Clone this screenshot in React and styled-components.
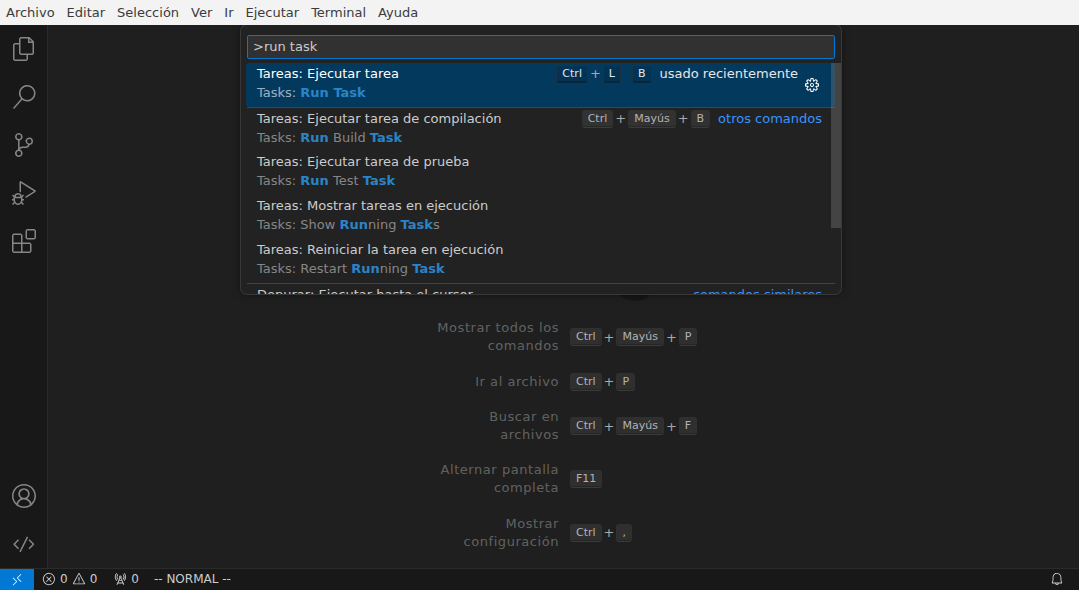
import React from 'react'
import styled, { createGlobalStyle } from 'styled-components'
import {
  VscFiles,
  VscSearch,
  VscSourceControl,
  VscDebugAlt,
  VscExtensions,
  VscAccount,
  VscCode,
  VscRemote,
  VscError,
  VscWarning,
  VscRadioTower,
  VscBell,
  VscSettingsGear,
} from 'react-icons/vsc'

const GlobalStyle = createGlobalStyle`
  html, body, #root {
    margin: 0;
    height: 100%;
  }
  body {
    font-family: "DejaVu Sans", sans-serif;
    font-size: 13px;
    overflow: hidden;
    background: #1f1f1f;
  }
`

const Page = styled.div`
  display: flex;
  flex-direction: column;
  height: 100vh;
`

const MenuBar = styled.div`
  display: flex;
  flex: none;
  height: 25px;
  align-items: center;
  background: #f3f3f3;
  color: #3b3b3b;
  padding-bottom: 1px;
  box-sizing: border-box;
`

const MenuItem = styled.div`
  padding: 0 6px;
`

const Workbench = styled.div`
  position: relative;
  display: flex;
  flex: 1;
  min-height: 0;
  overflow: hidden;
`

const ActivityBar = styled.div`
  display: flex;
  flex: none;
  flex-direction: column;
  justify-content: space-between;
  box-sizing: border-box;
  width: 48px;
  background: #181818;
  border-right: 1px solid #2b2b2b;
  color: #868686;
`

const ActivityGroup = styled.div`
  display: flex;
  flex-direction: column;
`

const ActivityItem = styled.div`
  display: flex;
  height: 48px;
  align-items: center;
  justify-content: center;
  font-size: 24px;
`

const Editor = styled.div`
  display: flex;
  flex: 1;
  flex-direction: column;
  align-items: center;
  justify-content: flex-end;
  padding-bottom: 17.4px;
  background: #1f1f1f;
`

const LogoMark = styled.svg`
  display: block;
  margin-left: 147px;
  margin-bottom: 18.6px;
`

const Watermark = styled.div`
  display: flex;
  flex-direction: column;
  gap: 17.3px;
  width: 265px;
`

const WatermarkRow = styled.div`
  display: flex;
  align-items: center;
  gap: 11px;
`

const WatermarkLabel = styled.div`
  flex: none;
  width: 128px;
  text-align: right;
  color: rgba(204, 204, 204, 0.4);
  letter-spacing: 0.55px;
  line-height: 18px;
`

const Keys = styled.div`
  display: flex;
  align-items: center;
  color: #a8a8a8;
  font-size: 13px;
`

const Plus = styled.span`
  margin: 0 2px;
`

const Key = styled.span`
  display: inline-block;
  box-sizing: border-box;
  height: 18px;
  padding: 0 5px;
  border-radius: 3px;
  background: ${(p) => (p.$dark ? 'rgba(0, 0, 0, 0.1)' : 'rgba(128, 128, 128, 0.17)')};
  border: 1px solid rgba(51, 51, 51, 0.6);
  border-bottom-color: ${(p) => (p.$dark ? 'rgba(20, 20, 20, 0.45)' : 'rgba(68, 68, 68, 0.6)')};
  box-shadow: inset 0 -1px 0 rgba(0, 0, 0, 0.2);
  font-size: 11px;
  line-height: 15px;
  color: ${(p) => (p.$dark ? '#e0e8ee' : '#b3b3b3')};
  margin-left: ${(p) => p.$chord || 0}px;
`

const QuickInput = styled.div`
  position: absolute;
  top: 0;
  left: 241px;
  display: flex;
  flex-direction: column;
  box-sizing: border-box;
  width: 600px;
  height: 269px;
  overflow: hidden;
  background: #222222;
  border-radius: 6px;
  box-shadow: 0 0 0 1px #383838, 0 0 8px rgba(0, 0, 0, 0.5);
`

const InputWrap = styled.div`
  flex: none;
  padding: 10px 6px 4px;
`

const CommandInput = styled.input`
  display: block;
  box-sizing: border-box;
  width: 100%;
  height: 24px;
  padding: 0 5px 2px;
  border: 1px solid #0078d4;
  border-radius: 2px;
  outline: none;
  background: #313131;
  color: #cccccc;
  font-family: "DejaVu Sans", sans-serif;
  font-size: 13px;
`

const List = styled.div`
  position: relative;
  flex: 1;
  min-height: 0;
  overflow: hidden;
  padding: 0 6px 0 5px;
`

const Scrollbar = styled.div`
  position: absolute;
  top: 0;
  right: 0;
  width: 10px;
  height: 165px;
  background: rgba(121, 121, 121, 0.4);
`

const Row = styled.div`
  position: relative;
  display: flex;
  box-sizing: border-box;
  height: 44px;
  padding: ${(p) => p.$top || 1}px ${(p) => (p.$active ? 37 : 13)}px 0 11px;
  justify-content: space-between;
  border-radius: ${(p) => (p.$active ? '3px' : '0')};
  background: ${(p) => (p.$active ? '#04395e' : 'transparent')};
  color: ${(p) => (p.$active ? '#ffffff' : '#cccccc')};
`

const Separator = styled.div`
  position: absolute;
  top: 0;
  left: 1px;
  right: 0;
  height: 1px;
  background: rgba(204, 204, 204, 0.2);
`

const RowLabels = styled.div`
  display: flex;
  flex-direction: column;
`

const Title = styled.div`
  line-height: 19px;
`

const Detail = styled.div`
  line-height: 19px;
  color: ${(p) => (p.$active ? 'rgba(255, 255, 255, 0.62)' : 'rgba(204, 204, 204, 0.6)')};
`

const Match = styled.span`
  color: #2a84c8;
  font-weight: 700;
`

const RowRight = styled.div`
  display: flex;
  align-items: center;
  height: 19px;
`

const Category = styled.span`
  margin-left: 8px;
  color: ${(p) => (p.$active ? '#e6e6e6' : '#3794ff')};
`

const GearIcon = styled.span`
  position: absolute;
  right: 16px;
  top: 15px;
  display: flex;
  font-size: 14px;
  color: #ffffff;
`

const StatusBar = styled.div`
  display: flex;
  flex: none;
  box-sizing: border-box;
  height: 22px;
  align-items: center;
  background: #181818;
  border-top: 1px solid #2b2b2b;
  color: #cccccc;
  font-size: 12px;
`

const RemoteButton = styled.div`
  display: flex;
  width: 34px;
  height: 100%;
  align-items: center;
  justify-content: center;
  background: #0078d4;
  color: #ffffff;
  font-size: 14px;
`

const StatusItem = styled.div`
  display: flex;
  align-items: center;
  gap: 4px;
  margin-left: ${(p) => p.$left}px;
  padding-bottom: 1px;
  font-size: 12px;
  svg {
    font-size: 14px;
  }
`

const StatusSpacer = styled.div`
  flex: 1;
`

const BellItem = styled.div`
  display: flex;
  margin-right: 15px;
  padding-bottom: 1px;
  font-size: 14px;
`

const menus = ['Archivo', 'Editar', 'Selección', 'Ver', 'Ir', 'Ejecutar', 'Terminal', 'Ayuda']

const Shortcut = ({ parts }) => (
  <Keys>
    {parts.map((part, i) => (
      <React.Fragment key={part + i}>
        {i > 0 && <Plus>+</Plus>}
        <Key>{part}</Key>
      </React.Fragment>
    ))}
  </Keys>
)

const App = () => {
  return (
    <Page>
      <GlobalStyle />
      <MenuBar>
        {menus.map((m) => (
          <MenuItem key={m}>{m}</MenuItem>
        ))}
      </MenuBar>
      <Workbench>
        <ActivityBar>
          <ActivityGroup>
            <ActivityItem><VscFiles /></ActivityItem>
            <ActivityItem><VscSearch /></ActivityItem>
            <ActivityItem><VscSourceControl /></ActivityItem>
            <ActivityItem><VscDebugAlt /></ActivityItem>
            <ActivityItem><VscExtensions /></ActivityItem>
          </ActivityGroup>
          <ActivityGroup>
            <ActivityItem><VscAccount /></ActivityItem>
            <ActivityItem><VscCode /></ActivityItem>
          </ActivityGroup>
        </ActivityBar>
        <Editor>
          <LogoMark width="40" height="8" viewBox="0 0 40 8">
            <path d="M0 0H34C32 4 27 8 20 8C12 8 3 4 0 0Z" fill="#171717" />
          </LogoMark>
          <Watermark>
            <WatermarkRow>
              <WatermarkLabel>Mostrar todos los comandos</WatermarkLabel>
              <Shortcut parts={['Ctrl', 'Mayús', 'P']} />
            </WatermarkRow>
            <WatermarkRow>
              <WatermarkLabel>Ir al archivo</WatermarkLabel>
              <Shortcut parts={['Ctrl', 'P']} />
            </WatermarkRow>
            <WatermarkRow>
              <WatermarkLabel>Buscar en archivos</WatermarkLabel>
              <Shortcut parts={['Ctrl', 'Mayús', 'F']} />
            </WatermarkRow>
            <WatermarkRow>
              <WatermarkLabel>Alternar pantalla completa</WatermarkLabel>
              <Shortcut parts={['F11']} />
            </WatermarkRow>
            <WatermarkRow>
              <WatermarkLabel>Mostrar configuración</WatermarkLabel>
              <Shortcut parts={['Ctrl', ',']} />
            </WatermarkRow>
          </Watermark>
        </Editor>
        <QuickInput>
          <InputWrap>
            <CommandInput readOnly value=">run task" />
          </InputWrap>
          <List>
            <Row $active>
              <RowLabels>
                <Title>Tareas: Ejecutar tarea</Title>
                <Detail $active>Tasks: <Match>Run Task</Match></Detail>
              </RowLabels>
              <RowRight>
                <Keys>
                  <Key $dark>Ctrl</Key>
                  <Plus>+</Plus>
                  <Key $dark>L</Key>
                  <Key $dark $chord={11}>B</Key>
                </Keys>
                <Category $active>usado recientemente</Category>
              </RowRight>
              <GearIcon><VscSettingsGear /></GearIcon>
            </Row>
            <Row $top={2}>
              <Separator />
              <RowLabels>
                <Title>Tareas: Ejecutar tarea de compilación</Title>
                <Detail>Tasks: <Match>Run</Match> Build <Match>Task</Match></Detail>
              </RowLabels>
              <RowRight>
                <Shortcut parts={['Ctrl', 'Mayús', 'B']} />
                <Category>otros comandos</Category>
              </RowRight>
            </Row>
            <Row>
              <RowLabels>
                <Title>Tareas: Ejecutar tarea de prueba</Title>
                <Detail>Tasks: <Match>Run</Match> Test <Match>Task</Match></Detail>
              </RowLabels>
            </Row>
            <Row>
              <RowLabels>
                <Title>Tareas: Mostrar tareas en ejecución</Title>
                <Detail>Tasks: Show <Match>Run</Match>ning <Match>Task</Match>s</Detail>
              </RowLabels>
            </Row>
            <Row>
              <RowLabels>
                <Title>Tareas: Reiniciar la tarea en ejecución</Title>
                <Detail>Tasks: Restart <Match>Run</Match>ning <Match>Task</Match></Detail>
              </RowLabels>
            </Row>
            <Row $top={2}>
              <Separator />
              <RowLabels>
                <Title>Depurar: Ejecutar hasta el cursor</Title>
              </RowLabels>
              <RowRight>
                <Category>comandos similares</Category>
              </RowRight>
            </Row>
            <Scrollbar />
          </List>
        </QuickInput>
      </Workbench>
      <StatusBar>
        <RemoteButton><VscRemote /></RemoteButton>
        <StatusItem $left={8}><VscError />0</StatusItem>
        <StatusItem $left={4}><VscWarning />0</StatusItem>
        <StatusItem $left={16}><VscRadioTower />0</StatusItem>
        <StatusItem $left={15}>-- NORMAL --</StatusItem>
        <StatusSpacer />
        <BellItem><VscBell /></BellItem>
      </StatusBar>
    </Page>
  )
}

export default App
